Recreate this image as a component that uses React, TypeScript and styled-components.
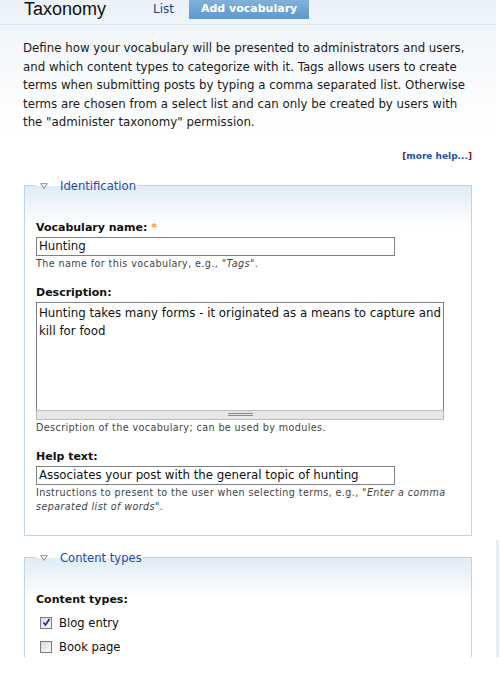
import { createGlobalStyle } from "styled-components";
import styled from "styled-components";

const GlobalStyle = createGlobalStyle`
  html, body {
    margin: 0;
    padding: 0;
    background: #fff;
  }
  body {
    font-family: "DejaVu Sans", Verdana, sans-serif;
    color: #222;
  }
`;

const Page = styled.div`
  display: flex;
  height: 657px;
  overflow: hidden;
`;

const Main = styled.div`
  width: 496px;
  background: linear-gradient(#eaf1f7 0, #f3f7fa 40px, #fff 130px);
`;

const SideStrip = styled.div`
  width: 3px;
  margin-top: 540px;
  background: #e3eef7;
`;

const Header = styled.div`
  display: flex;
  align-items: flex-start;
  height: 24px;
  padding-left: 24px;
  border-bottom: 1px solid #dbe5ee;
  box-shadow: 0 1px 0 #f7fafc;
`;

const Title = styled.h1`
  margin: 0;
  width: 120px;
  font-family: "Liberation Sans", Arial, sans-serif;
  font-weight: normal;
  font-size: 18px;
  line-height: 19px;
  color: #111;
`;

const Tabs = styled.ul`
  display: flex;
  margin: 0;
  padding: 0;
  list-style: none;
`;

const Tab = styled.li<{ $active?: boolean }>`
  height: 19px;
  padding: 0 ${(p) => (p.$active ? "12px" : "9px")};
  margin-left: ${(p) => (p.$active ? "6px" : "0")};
  font-size: ${(p) => (p.$active ? "11px" : "12px")};
  font-weight: ${(p) => (p.$active ? "bold" : "normal")};
  line-height: 18px;
  color: ${(p) => (p.$active ? "#fff" : "#1f3f8f")};
  background: ${(p) =>
    p.$active ? "linear-gradient(#80b1dc, #5e98cc)" : "transparent"};
`;

const Content = styled.div`
  padding: 14px 24px 0 23px;
`;

const Intro = styled.p`
  margin: 0;
  font-size: 11.8px;
  line-height: 18.5px;
  color: #1a1a1a;
`;

const MoreHelp = styled.div`
  margin-top: 19px;
  text-align: right;
  font-size: 9px;
  font-weight: bold;
  color: #8a1c1c;

  a {
    color: #1f4fa8;
    text-decoration: none;
  }
`;

const Fieldset = styled.fieldset<{ $gap?: number }>`
  margin: ${(p) => p.$gap ?? 18}px 0 0 1px;
  padding: 11px 11px 21px 11px;
  border: 1px solid #b9d7ec;
  background: linear-gradient(#e0ecf6 0, #f6f9fc 28px, #fff 40px);
  min-width: 0;
`;

const Legend = styled.legend`
  display: flex;
  align-items: center;
  gap: 12px;
  margin-left: 0;
  padding: 0 1px 0 4px;
  font-size: 11.6px;
  color: #1b49b3;

  svg {
    display: block;
  }
`;

const FormItem = styled.div`
  margin-top: 15px;

  &:first-of-type {
    margin-top: 17px;
  }
`;

const Label = styled.label`
  display: block;
  font-size: 11px;
  font-weight: bold;
  line-height: 14px;
  color: #111;
  margin-bottom: 2px;
`;

const Required = styled.span`
  color: #f39c1f;
`;

const TextInput = styled.input`
  display: block;
  box-sizing: border-box;
  width: 359px;
  height: 19px;
  margin: 0;
  padding: 0 2px;
  border: 1px solid #7f7f88;
  font-family: "DejaVu Sans", Verdana, sans-serif;
  font-size: 11.8px;
  color: #111;
  background: #fff;
`;

const TextArea = styled.textarea`
  display: block;
  box-sizing: border-box;
  width: 408px;
  height: 108px;
  margin: 2px 0 0;
  padding: 1px 2px;
  border: 1px solid #7f7f88;
  border-bottom: none;
  font-family: "DejaVu Sans", Verdana, sans-serif;
  font-size: 11.8px;
  line-height: 18px;
  color: #111;
  resize: none;
`;

const Grippie = styled.div`
  box-sizing: border-box;
  width: 408px;
  height: 10px;
  background: #e6e6e6;
  border: 1px solid #bdbdbd;
  display: flex;
  align-items: center;
  justify-content: center;

  span {
    width: 25px;
    height: 3px;
    border-top: 1px solid #888;
    border-bottom: 1px solid #888;
    box-sizing: border-box;
  }
`;

const Description = styled.div`
  margin-top: 1px;
  font-size: 9.6px;
  line-height: 14px;
  letter-spacing: 0.4px;
  color: #444;

  em {
    color: #444;
  }
`;

const CheckList = styled.div`
  display: flex;
  flex-direction: column;
  gap: 4px;
  margin-top: 6px;
`;

const CheckRow = styled.label`
  display: flex;
  align-items: center;
  gap: 7px;
  margin-left: 4px;
  height: 20px;
  font-size: 11.6px;
  color: #111;
`;

const Box = styled.span`
  box-sizing: border-box;
  width: 12px;
  height: 12px;
  border: 1px solid #7a7a82;
  background: linear-gradient(135deg, #d8d8dc, #fafafa);
  display: flex;
  align-items: center;
  justify-content: center;
`;

const Triangle = () => (
  <svg width="8" height="6" viewBox="0 0 8 6">
    <path d="M0.7 0.7 H7.3 L4 5.4 Z" fill="none" stroke="#8a8a8a" strokeWidth="1" />
  </svg>
);

const Check = () => (
  <svg width="9" height="9" viewBox="0 0 9 9">
    <path d="M1.5 4.5 L3.5 7 L7.5 1" fill="none" stroke="#1a2a8a" strokeWidth="1.6" />
  </svg>
);

export default function App() {
  return (
    <>
      <GlobalStyle />
      <Page>
        <Main>
          <Header>
            <Title>Taxonomy</Title>
            <Tabs>
              <Tab>List</Tab>
              <Tab $active>Add vocabulary</Tab>
            </Tabs>
          </Header>
          <Content>
            <Intro>
              Define how your vocabulary will be presented to administrators and users,
              and which content types to categorize with it. Tags allows users to create
              terms when submitting posts by typing a comma separated list. Otherwise
              terms are chosen from a select list and can only be created by users with
              the "administer taxonomy" permission.
            </Intro>
            <MoreHelp>
              [<a href="#">more help...</a>]
            </MoreHelp>

            <Fieldset>
              <Legend>
                <Triangle />
                Identification
              </Legend>
              <FormItem>
                <Label>
                  Vocabulary name: <Required>*</Required>
                </Label>
                <TextInput defaultValue="Hunting" />
                <Description>
                  The name for this vocabulary, e.g., <em>"Tags"</em>.
                </Description>
              </FormItem>
              <FormItem>
                <Label>Description:</Label>
                <TextArea defaultValue="Hunting takes many forms - it originated as a means to capture and kill for food" />
                <Grippie>
                  <span />
                </Grippie>
                <Description>Description of the vocabulary; can be used by modules.</Description>
              </FormItem>
              <FormItem>
                <Label>Help text:</Label>
                <TextInput defaultValue="Associates your post with the general topic of hunting" />
                <Description>
                  Instructions to present to the user when selecting terms, e.g.,{" "}
                  <em>"Enter a comma separated list of words"</em>.
                </Description>
              </FormItem>
            </Fieldset>

            <Fieldset $gap={15}>
              <Legend>
                <Triangle />
                Content types
              </Legend>
              <FormItem>
                <Label>Content types:</Label>
                <CheckList>
                  <CheckRow>
                    <Box>
                      <Check />
                    </Box>
                    Blog entry
                  </CheckRow>
                  <CheckRow>
                    <Box />
                    Book page
                  </CheckRow>
                </CheckList>
              </FormItem>
            </Fieldset>
          </Content>
        </Main>
        <SideStrip />
      </Page>
    </>
  );
}
